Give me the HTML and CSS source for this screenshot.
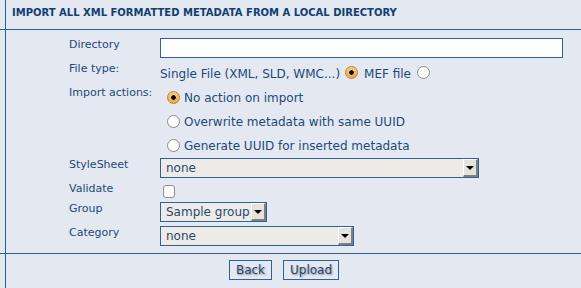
FILE: index.html
```html
<!DOCTYPE html>
<html lang="en">
<head>
    <meta charset="UTF-8">
    <title>Import XML metadata</title>
    <link rel="stylesheet" href="styles.css">
</head>
<body>
    <div class="title-bar">IMPORT ALL XML FORMATTED METADATA FROM A LOCAL DIRECTORY</div>

    <div class="import-form">
        <div class="row row-dir">
            <label class="label">Directory</label>
            <div class="value"><input type="text" class="text-input"></div>
        </div>

        <div class="row row-type">
            <label class="label">File type:</label>
            <div class="value inline">
                <span>Single File (XML, SLD, WMC...)</span>
                <input type="radio" name="filetype" class="radio" checked>
                <span>MEF file</span>
                <input type="radio" name="filetype" class="radio">
            </div>
        </div>

        <div class="row row-actions">
            <label class="label">Import actions:</label>
            <div class="value options">
                <label class="option"><input type="radio" name="action" class="radio" checked> No action on import</label>
                <label class="option"><input type="radio" name="action" class="radio"> Overwrite metadata with same UUID</label>
                <label class="option"><input type="radio" name="action" class="radio"> Generate UUID for inserted metadata</label>
            </div>
        </div>

        <div class="row">
            <label class="label">StyleSheet</label>
            <div class="value"><div class="select wide"><span>none</span><i class="arrow"></i></div></div>
        </div>

        <div class="row row-short">
            <label class="label">Validate</label>
            <div class="value"><input type="checkbox" class="check"></div>
        </div>

        <div class="row">
            <label class="label">Group</label>
            <div class="value"><div class="select small"><span>Sample group</span><i class="arrow"></i></div></div>
        </div>

        <div class="row">
            <label class="label">Category</label>
            <div class="value"><div class="select medium"><span>none</span><i class="arrow"></i></div></div>
        </div>
    </div>

    <div class="buttons">
        <button class="btn">Back</button>
        <button class="btn">Upload</button>
    </div>
</body>
</html>
```

FILE: styles.css
```css
body {
    margin: 0;
    height: 288px;
    overflow: hidden;
    font-family: "DejaVu Sans", Verdana, sans-serif;
    color: #1e4a78;
    /* trait vertical a gauche */
    background: linear-gradient(#2f629a, #2f629a) 5px 0 / 1px 100% no-repeat, #e3e8f1;
}
.title-bar {
    height: 29px;
    line-height: 25px;
    padding-left: 12px;
    border-bottom: 1px solid #2f629a;
    font-size: 10px;
    font-weight: bold;
    color: #123f70;
}
.import-form {
    padding: 5px 0 0 69px;
    height: 218px;
    border-bottom: 1px solid #2f629a;
}
.row {
    display: grid;
    grid-template-columns: 91px 1fr;
    height: 24px;
}
.row-dir {
    height: 25px;
}
.row-short {
    height: 20px;
}
.row-actions {
    height: 72px;
}
.label {
    font-size: 11px;
    line-height: 14px;
    padding-top: 2px;
}
.row-dir .label {
    padding-top: 3px;
}
.value {
    font-size: 12px;
    padding-top: 2px;
}
.row-dir .value {
    padding-top: 3px;
}
.text-input {
    box-sizing: border-box;
    width: 403px;
    height: 20px;
    margin: 0;
    border: 1px solid #2f629a;
    background: #fff;
}
.inline {
    display: flex;
    align-items: center;
    height: 22px;
    padding-top: 5px;
    box-sizing: border-box;
}
.inline span {
    line-height: 14px;
}
.inline .radio {
    margin: 0 6px 3px 5px;
}
.inline .radio:last-child {
    margin-left: 6px;
}
.radio {
    appearance: none;
    width: 13px;
    height: 13px;
    margin: 0;
    border: 1px solid #8c8c8c;
    border-radius: 50%;
    background: #fff;
    box-sizing: border-box;
}
.radio:checked {
    border-color: #c47e28;
    background: radial-gradient(circle, #000 0 2px, transparent 2.5px), linear-gradient(#f9cd86, #f0a848);
}
.options {
    padding-top: 0;
    padding-left: 7px;
}
.option {
    display: flex;
    align-items: center;
    gap: 4px;
    height: 24px;
    line-height: 14px;
    padding-top: 3px;
    box-sizing: border-box;
}
.check {
    appearance: none;
    width: 12px;
    height: 13px;
    margin: 3px 0 0 3px;
    border: 1px solid #8c8c8c;
    border-radius: 3px;
    background: #fff;
}
.select {
    box-sizing: border-box;
    height: 20px;
    display: flex;
    align-items: center;
    justify-content: space-between;
    border: 1px solid #2f629a;
    background: #eeebe6;
    padding-left: 5px;
}
.select.wide {
    width: 319px;
}
.select.small {
    width: 107px;
}
.select.medium {
    width: 194px;
}
.arrow {
    width: 15px;
    height: 18px;
    box-sizing: border-box;
    border-top: 1px solid #fff;
    border-left: 1px solid #fff;
    border-right: 2px solid #7f7f7f;
    border-bottom: 2px solid #7f7f7f;
    background: #e6e3dd;
    display: flex;
    align-items: center;
    justify-content: center;
}
.arrow::after {
    content: "";
    border-left: 4px solid transparent;
    border-right: 4px solid transparent;
    border-top: 4px solid #000;
    margin-top: 1px;
}
.buttons {
    display: flex;
    justify-content: center;
    gap: 11px;
    padding: 6px 13px 0 0;
}
.btn {
    font-family: "DejaVu Sans", Verdana, sans-serif;
    font-size: 12px;
    height: 20px;
    padding: 0 6px;
    border: 1px solid #2f629a;
    background: #e3e8f1;
    color: #1e4a78;
    text-shadow: 1px 1px 2px #8a8a8a;
}
```
